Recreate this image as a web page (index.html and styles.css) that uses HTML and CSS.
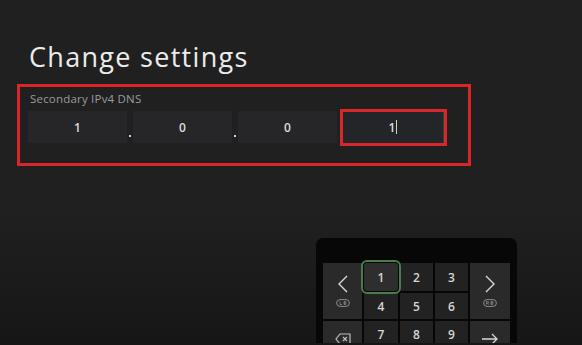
FILE: index.html
```html
<!DOCTYPE html>
<html lang="en">
  <head>
    <meta charset="UTF-8" />
    <meta name="viewport" content="width=device-width, initial-scale=1.0" />
    <title>Change settings</title>
    <link rel="stylesheet" href="styles.css">
  </head>
  <body>
    <div class="screen">
      <h1 class="title">Change settings</h1>

      <div class="mark-box">
        <div class="label">Secondary IPv4 DNS</div>
        <div class="fields">
          <div class="field">1</div>
          <span class="dot"></span>
          <div class="field">0</div>
          <span class="dot"></span>
          <div class="field">0</div>
          <span class="dot dot-gap"></span>
          <div class="field-mark">
            <div class="field focused">1<span class="caret"></span></div>
          </div>
        </div>
      </div>

      <div class="keypad">
        <div class="keys">
          <div class="key side left">
            <svg width="12" height="18" viewBox="0 0 12 18"><path d="M10 1 L2 9 L10 17" fill="none" stroke="#d8d8d8" stroke-width="1.4"/></svg>
            <svg class="bumper" width="14" height="8" viewBox="0 0 14 8"><rect x="0.6" y="0.6" width="12.8" height="6.8" rx="3.4" fill="none" stroke="#8a8a8a" stroke-width="1"/><path d="M4 2.5v3h2M8 2.5v3h1.5a0.8 0.8 0 0 0 0-1.5H8m0 0h1.3a0.7 0.7 0 0 0 0-1.5H8" fill="none" stroke="#8a8a8a" stroke-width="0.8"/></svg>
          </div>
          <div class="key active">1</div>
          <div class="key">2</div>
          <div class="key">3</div>
          <div class="key side right">
            <svg width="12" height="18" viewBox="0 0 12 18"><path d="M2 1 L10 9 L2 17" fill="none" stroke="#d8d8d8" stroke-width="1.4"/></svg>
            <svg class="bumper" width="14" height="8" viewBox="0 0 14 8"><rect x="0.6" y="0.6" width="12.8" height="6.8" rx="3.4" fill="none" stroke="#8a8a8a" stroke-width="1"/><path d="M3.5 5.5v-3h1.3a0.8 0.8 0 0 1 0 1.6H3.5m1.2 0 0.9 1.4M8 2.5v3h1.5a0.8 0.8 0 0 0 0-1.5H8m0 0h1.3a0.7 0.7 0 0 0 0-1.5H8" fill="none" stroke="#8a8a8a" stroke-width="0.8"/></svg>
          </div>
          <div class="key">4</div>
          <div class="key">5</div>
          <div class="key">6</div>
          <div class="key side low">
            <svg width="16" height="12" viewBox="0 0 16 12"><path d="M5 1h10v10H5L1 6z" fill="none" stroke="#bdbdbd" stroke-width="1.2"/><path d="M8 4l4 4M12 4l-4 4" stroke="#bdbdbd" stroke-width="1.2"/></svg>
          </div>
          <div class="key">7</div>
          <div class="key">8</div>
          <div class="key">9</div>
          <div class="key side low">
            <svg width="18" height="12" viewBox="0 0 18 12"><path d="M1 6h15M11 1l5 5-5 5" fill="none" stroke="#d8d8d8" stroke-width="1.3"/></svg>
          </div>
        </div>
      </div>
    </div>
  </body>
</html>
```

FILE: styles.css
```css
* {
  padding: 0;
  margin: 0;
  box-sizing: border-box;
}
body {
  width: 582px;
  height: 345px;
  overflow: hidden;
  background: linear-gradient(#202020 0px, #202020 210px, #161616 345px);
  font-family: "Open Sans", "Noto Sans", sans-serif;
  color: #e6e6e6;
}
.screen {
  padding-top: 39px;
}
.title {
  margin-left: 29px;
  font-size: 27px;
  font-weight: 400;
  line-height: 36px;
  color: #ececec;
  letter-spacing: 1.3px;
}
.mark-box {
  margin: 9px 0 0 17px;
  width: 454px;
  height: 82px;
  border: 3px solid #d8262b;
  padding: 4px 0 0 8px;
}
.label {
  margin-left: 2px;
  font-size: 11.5px;
  line-height: 15px;
  letter-spacing: 0.2px;
  color: #9c9c9c;
}
.fields {
  display: flex;
  align-items: flex-start;
  margin-top: 5px;
}
.field {
  width: 99px;
  height: 32px;
  background: #262629;
  display: flex;
  align-items: center;
  justify-content: center;
  font-size: 12px;
  font-weight: 600;
  color: #dcdcdc;
}
.dot {
  width: 6px;
  height: 32px;
  position: relative;
}
.dot::after {
  content: "";
  position: absolute;
  left: 2px;
  bottom: 6px;
  width: 2px;
  height: 2px;
  background: #d0d0d0;
}
.dot-gap::after {
  display: none;
}
.field-mark {
  position: relative;
}
.field-mark::after {
  content: "";
  position: absolute;
  left: -3px;
  top: -2px;
  right: -4px;
  bottom: -3px;
  border: 3px solid #d8262b;
}
.field.focused {
  width: 100px;
  height: 32px;
  background: #242528;
  box-shadow: 0 0 2px 1px #2a5e2a;
}
.caret {
  display: inline-block;
  width: 1px;
  height: 14px;
  margin-left: 1px;
  background: #cfcfcf;
}
.keypad {
  margin: 72px 0 0 316px;
  width: 201px;
  height: 105px;
  overflow: hidden;
  background: #070707;
  border-radius: 7px 7px 0 0;
  padding: 25px 0 0 7px;
}
.keys {
  display: grid;
  grid-template-columns: 39px 34px 33px 33px 40px;
  grid-template-rows: 28px 26px 26px 26px;
  gap: 2px;
}
.key {
  background: #222222;
  display: flex;
  align-items: center;
  justify-content: center;
  font-size: 12px;
  font-weight: 600;
  color: #d6d6d6;
}
.key.active {
  background: #2e2e2e;
  border-radius: 3px;
  outline: 2px solid #4b7c4d;
  outline-offset: 1px;
  z-index: 1;
}
.side {
  grid-row: span 2;
  background: #2a2a2a;
  flex-direction: column;
  gap: 6px;
}
.side.left {
  grid-column: 1;
}
.side.right {
  grid-column: 5;
  grid-row: 1 / span 2;
}
.side.low {
  justify-content: flex-start;
  padding-top: 12px;
}
.bumper {
  display: block;
}
```
